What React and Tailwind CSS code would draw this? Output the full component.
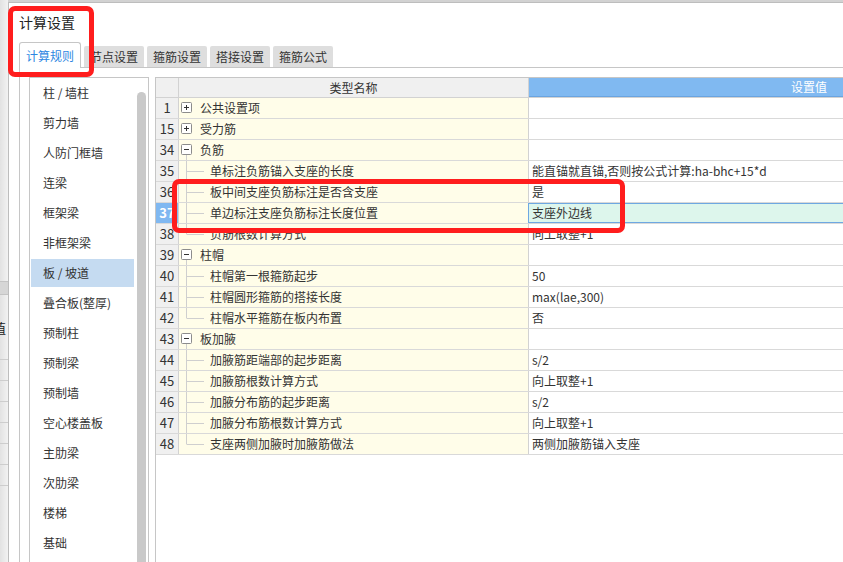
import React from "react";

const tabs = ["计算规则", "节点设置", "箍筋设置", "搭接设置", "箍筋公式"];

const members = [
  "柱 / 墙柱",
  "剪力墙",
  "人防门框墙",
  "连梁",
  "框架梁",
  "非框架梁",
  "板 / 坡道",
  "叠合板(整厚)",
  "预制柱",
  "预制梁",
  "预制墙",
  "空心楼盖板",
  "主肋梁",
  "次肋梁",
  "楼梯",
  "基础",
];

// type: g = group (open / closed), c = child, l = last child
const rows = [
  { no: 1, type: "g", open: false, name: "公共设置项", value: "" },
  { no: 15, type: "g", open: false, name: "受力筋", value: "" },
  { no: 34, type: "g", open: true, name: "负筋", value: "" },
  { no: 35, type: "c", name: "单标注负筋锚入支座的长度", value: "能直锚就直锚,否则按公式计算:ha-bhc+15*d" },
  { no: 36, type: "c", name: "板中间支座负筋标注是否含支座", value: "是" },
  { no: 37, type: "c", name: "单边标注支座负筋标注长度位置", value: "支座外边线", selected: true },
  { no: 38, type: "l", name: "负筋根数计算方式", value: "向上取整+1" },
  { no: 39, type: "g", open: true, name: "柱帽", value: "" },
  { no: 40, type: "c", name: "柱帽第一根箍筋起步", value: "50" },
  { no: 41, type: "c", name: "柱帽圆形箍筋的搭接长度", value: "max(lae,300)" },
  { no: 42, type: "l", name: "柱帽水平箍筋在板内布置", value: "否" },
  { no: 43, type: "g", open: true, name: "板加腋", value: "" },
  { no: 44, type: "c", name: "加腋筋距端部的起步距离", value: "s/2" },
  { no: 45, type: "c", name: "加腋筋根数计算方式", value: "向上取整+1" },
  { no: 46, type: "c", name: "加腋分布筋的起步距离", value: "s/2" },
  { no: 47, type: "c", name: "加腋分布筋根数计算方式", value: "向上取整+1" },
  { no: 48, type: "l", name: "支座两侧加腋时加腋筋做法", value: "两侧加腋筋锚入支座" },
];

const TreeMark = ({ row }) => {
  if (row.type === "g") {
    return (
      <svg width="21" height="20" className="shrink-0">
        <rect x="2.5" y="4.5" width="10" height="10" rx="1" fill="#fff" stroke="#8c8c8c" />
        <line x1="5" y1="9.5" x2="10" y2="9.5" stroke="#333" />
        {!row.open && <line x1="7.5" y1="7" x2="7.5" y2="12" stroke="#333" />}
        {row.open && <line x1="7.5" y1="15" x2="7.5" y2="20" stroke="#cfcfcf" />}
      </svg>
    );
  }
  return (
    <svg width="31" height="20" className="shrink-0">
      <line x1="7.5" y1="0" x2="7.5" y2={row.type === "l" ? 10.5 : 20} stroke="#cfcfcf" />
      <line x1="8" y1="10.5" x2="25" y2="10.5" stroke="#cfcfcf" />
    </svg>
  );
};

const App = () => {
  return (
    <div className="relative w-[843px] h-[562px] overflow-hidden bg-[#d2d2d2] flex font-['Noto_Sans_CJK_SC',sans-serif] text-[12px] text-[#333]">
      {/* window behind the dialog */}
      <div className="w-[8px] h-full shrink-0 bg-gradient-to-r from-[#e2e2e2] to-[#f2f2f2] flex flex-col overflow-hidden">
        <div className="h-[281px] shrink-0" />
        <div className="h-[14px] shrink-0 bg-[#d6d6d6] border-y border-[#c4c4c4]" />
        <div className="h-[44px] shrink-0 flex items-end pb-[2px]">
          <span className="ml-[-7px] text-[13px] leading-[18px] text-[#222]">值</span>
        </div>
        {[0, 1, 2, 3, 4, 5, 6].map((i) => (
          <div key={i} className="h-[21px] shrink-0 border-b border-[#cdcdcd]" />
        ))}
      </div>

      {/* dialog */}
      <div className="flex-1 mt-[2px] bg-white border-l border-t border-[#bdbdbd] flex flex-col min-w-0">
        <div className="h-[39px] shrink-0 pl-[10px] pt-[10px] text-[14px] leading-[18px] text-[#222]">
          计算设置
        </div>

        <div className="h-[25px] shrink-0 flex items-end gap-[3px] pl-[10px]">
          {tabs.map((t, i) =>
            i === 0 ? (
              <div
                key={t}
                className="relative z-10 -mb-px w-[62px] h-[26px] bg-white border border-b-0 border-[#c6c6c6] rounded-t-[3px] flex items-center justify-center text-[#2d87e2]"
              >
                {t}
              </div>
            ) : (
              <div
                key={t}
                className="w-[60px] h-[21px] bg-[#dedede] rounded-t-[2px] flex items-center justify-center text-[#333]"
              >
                {t}
              </div>
            )
          )}
        </div>

        <div className="flex-1 min-h-0 ml-[10px] border-l border-t border-[#c6c6c6] pl-[9px] pt-[9px] flex">
          {/* member list */}
          <div className="w-[120px] shrink-0 border-l border-t border-r border-[#c6c6c6] flex">
            <div className="flex-1 flex flex-col gap-[2px] pt-[1px]">
              {members.map((m, i) => (
                <div
                  key={m}
                  className={`ml-[1px] w-[103px] h-[28px] shrink-0 flex items-center pl-[12px] ${
                    i === 6 ? "bg-[#c5dbf1]" : ""
                  }`}
                >
                  {m}
                </div>
              ))}
            </div>
            <div className="w-[9px] pt-[14px] mr-[2px]">
              <div className="h-full bg-[#c9c9c9] rounded-t-full" />
            </div>
          </div>

          {/* settings grid */}
          <div className="ml-[6px] flex-1 min-w-0 border-l border-t border-[#c6c6c6] overflow-hidden">
            <div className="w-[934px]">
              <div className="flex h-[20px] border-b border-[#d2d2d2]">
                <div className="w-[23px] shrink-0 bg-[#f0f0f0] border-r border-[#d2d2d2]" />
                <div className="w-[350px] shrink-0 bg-[#f0f0f0] border-r border-[#d2d2d2] flex items-center justify-center">
                  类型名称
                </div>
                <div className="w-[560px] shrink-0 bg-[#80b9f1] border-b border-[#6aa4e0] flex items-center justify-center text-white">
                  设置值
                </div>
              </div>

              {rows.map((r) => (
                <div key={r.no} className="flex h-[21px] border-b border-[#d9d9d9]">
                  <div
                    className={`w-[23px] shrink-0 border-r border-[#d2d2d2] flex items-center justify-center text-[13px] ${
                      r.selected ? "bg-[#80b8f1] text-white font-bold" : "bg-[#f0f0f0]"
                    }`}
                  >
                    {r.no}
                  </div>
                  <div className="w-[350px] shrink-0 bg-[#fffde9] border-r border-[#d2d2d2] flex items-center">
                    <TreeMark row={r} />
                    <span>{r.name}</span>
                  </div>
                  <div
                    className={`w-[560px] shrink-0 flex items-center pl-[3px] ${
                      r.selected ? "bg-[#ddf6ec] border border-[#6ea8e2] -ml-px" : "bg-white"
                    }`}
                  >
                    {r.value}
                  </div>
                </div>
              ))}
            </div>
          </div>
        </div>
      </div>

      {/* red highlight marks */}
      <div className="absolute left-[8px] top-[6px] w-[86px] h-[71px] border-[5px] border-[#ff1d1d] rounded-[7px]" />
      <div className="absolute left-[172px] top-[179px] w-[453px] h-[54px] border-[5px] border-[#ff1d1d] rounded-[7px]" />
    </div>
  );
};

export default App;
